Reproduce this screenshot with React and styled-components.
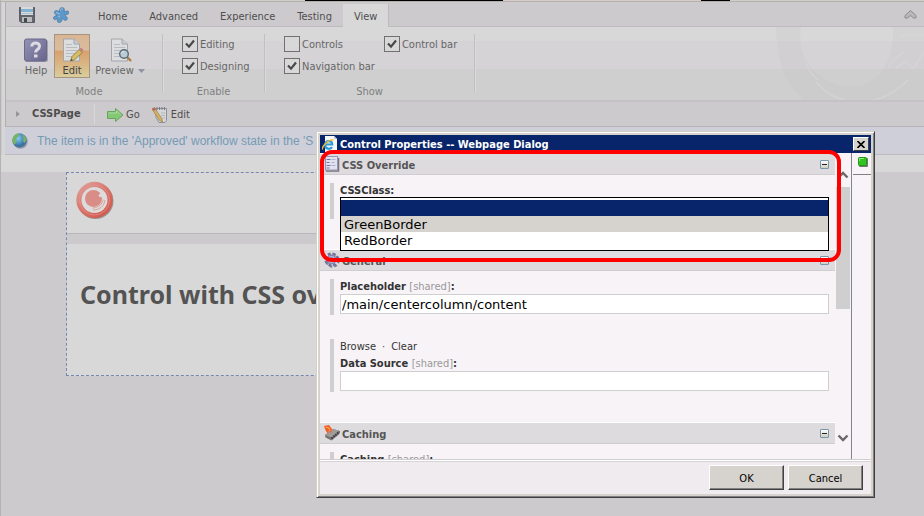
import React from 'react';
import styled, { createGlobalStyle, css } from 'styled-components';

const uiFont = '"DejaVu Sans Condensed", "DejaVu Sans", sans-serif';
const wideFont = '"DejaVu Sans", sans-serif';

const Global = createGlobalStyle`
  * { box-sizing: border-box; }
  body {
    margin: 0;
    background: #cdcacd;
    font: 11px/14px ${uiFont};
    color: #4e4e4e;
    overflow: hidden;
  }
  button, input, select { font: inherit; color: inherit; }
  h1, h2, ul { margin: 0; padding: 0; font-size: inherit; }
`;

const Page = styled.div`
  position: relative;
  min-height: 100vh;
  border-left: 1px solid #b4b2b4;
  background: #cdcacd;
`;

const Strip = styled.div`
  display: flex;
  height: 2px;
  padding-left: 304px;
  background: #cfcfc8;
  border-bottom: 1px solid #b2b2ac;
`;

const StripPart = styled.span`
  width: ${(p) => p.$width}px;
  background: ${(p) => p.$color};
`;

const Chrome = styled.header`
  margin-left: 4px;
  border-left: 1px solid #b0aeb0;
  box-shadow: -3px 0 0 #d6d6d6;
`;

const TabBar = styled.nav`
  display: flex;
  align-items: center;
  height: 25px;
  padding-right: 5px;
  border-bottom: 1px solid #bdbbbd;
`;

const QuickButton = styled.button`
  width: 16px;
  height: 16px;
  margin: 2px 0 0 ${(p) => p.$before}px;
  padding: 0;
  border: 0;
  background: none;
  svg { display: block; }
`;

const Tabs = styled.div`
  display: flex;
  align-self: stretch;
  flex: 1;
  margin-left: 18px;
  padding-top: 2px;
`;

const Tab = styled.a`
  height: 23px;
  padding: 6px 11px 0;
  color: #4e4e4e;
  text-decoration: none;
  ${(p) => p.$active && css`
    background: #d8d8d8;
    border-right: 1px solid #bdbbbd;
  `}
`;

const Ribbon = styled.div`
  position: relative;
  display: flex;
  height: 75px;
  padding: 7px 0 0 10px;
  border-bottom: 2px solid #c4c2c4;
  background: linear-gradient(#d8d8d8 14px, #d5d3d6 14px 42px, #cfcfcf 42px);
`;

const Watermark = styled.svg`
  position: absolute;
  top: 0;
  right: 0;
`;

const Group = styled.section`
  display: flex;
  flex-direction: column;
  width: ${(p) => p.$width}px;
  height: 58px;
  border-right: 1px solid #c1bfc1;
  box-shadow: 1px 0 0 #dadada;
`;

const GroupBody = styled.div`
  display: flex;
  flex: none;
  align-items: flex-start;
  gap: ${(p) => p.$gap}px;
  height: 50px;
  padding-left: ${(p) => p.$indent}px;
`;

const GroupTitle = styled.div`
  color: #808080;
  line-height: 16px;
  text-align: center;
`;

const BigButton = styled.button`
  display: flex;
  flex-direction: column;
  align-items: center;
  gap: 2px;
  width: ${(p) => p.$width}px;
  height: 44px;
  padding: 3px 0 0;
  border: 1px solid transparent;
  background: none;
  color: #666;
  white-space: nowrap;
  svg { flex: none; }
  ${(p) => p.$active && css`
    border-color: #a8947e;
    color: #444;
    background: linear-gradient(#d9b694, #d9bd9f 36%, #d89f6c 38%, #d9cd9c);
  `}
`;

const Caption = styled.span`
  display: flex;
  align-items: center;
  gap: 4px;
`;

const CheckColumn = styled.div`
  display: flex;
  flex-direction: column;
  gap: 6px;
  padding-top: 2px;
`;

const Check = styled.label`
  display: flex;
  align-items: center;
  gap: 2px;
  height: 16px;
  color: #666;
  line-height: 16px;
  white-space: nowrap;
`;

const CheckText = styled.span`
  padding-top: 2px;
`;

const CheckInput = styled.input`
  appearance: none;
  width: 16px;
  height: 16px;
  margin: 0;
  border: 1px solid #707070;
  background: #d8d8d8;
  &:checked {
    background: #d8d8d8 url("data:image/svg+xml,%3Csvg xmlns='http://www.w3.org/2000/svg' width='14' height='14'%3E%3Cpath d='M3 6.5l3 3.2 5-6.2' fill='none' stroke='%23484848' stroke-width='2.2'/%3E%3C/svg%3E");
  }
`;

const Crumbs = styled.div`
  display: flex;
  align-items: center;
  height: 25px;
  border-bottom: 1px solid #b6b4b6;
`;

const PageName = styled.button`
  display: flex;
  align-items: center;
  gap: 12px;
  width: 89px;
  height: 20px;
  padding: 0 0 0 10px;
  border: 0;
  border-right: 1px solid #d8d8d8;
  background: none;
  font-weight: bold;
`;

const CrumbButton = styled.button`
  display: flex;
  align-items: center;
  gap: ${(p) => p.$gap}px;
  margin-left: 12px;
  padding: 1px 0 0;
  border: 0;
  background: none;
`;

const Notice = styled.div`
  display: flex;
  align-items: center;
  gap: 9px;
  height: 28px;
  margin-left: 4px;
  padding-left: 7px;
  border-bottom: 1px solid #bcbcbc;
  box-shadow: -3px 0 0 #d6d6d6;
  background: #cecfd9;
  color: #769bb3;
  font: 12px/16px "Liberation Sans", Arial, sans-serif;
  white-space: nowrap;
`;

const Stage = styled.main`
  padding: 0 66px 0 65px;
  border-top: 17px solid #d8d8d8;
`;

const Canvas = styled.article`
  height: 204px;
  border: 1px dashed #7488b0;
  background: #d8d8d8;
`;

const CanvasHead = styled.div`
  height: 71px;
  padding: 8px 0 0 9px;
  border-bottom: 10px solid #cdcacd;
  box-shadow: inset 0 -1px 0 #b8b8b8;
`;

const Heading = styled.h1`
  padding: 34px 0 0 13px;
  color: #535353;
  font: bold 25px/32px "Noto Sans", ${uiFont};
  white-space: nowrap;
`;

const Dialog = styled.div`
  position: absolute;
  top: 131px;
  left: 315px;
  right: 49px;
  padding: 3px;
  border: 1px solid;
  border-color: #d4d0c8 #404040 #404040 #d4d0c8;
  box-shadow: inset 1px 1px 0 #fff, inset -1px -1px 0 #808080;
  background: #d6d3ce;
`;

const TitleBar = styled.div`
  display: flex;
  align-items: center;
  height: 18px;
  padding: 0 2px;
  background: #08246b;
  color: #fff;
  font-weight: bold;
`;

const TitleText = styled.span`
  flex: 1;
  margin-left: 2px;
  padding-top: 2px;
`;

const CloseButton = styled.button`
  display: flex;
  align-items: center;
  justify-content: center;
  width: 16px;
  height: 14px;
  padding: 0;
  border: 1px solid;
  border-color: #fff #404040 #404040 #fff;
  background: #d6d3ce;
`;

const DialogBody = styled.div`
  display: flex;
  height: 307px;
  border-bottom: 1px solid #cfcdcf;
  background: #f7f3f7;
`;

const Scroller = styled.div`
  flex: 1;
  min-width: 0;
  overflow: hidden;
`;

const ScrollTrack = styled.div`
  display: flex;
  flex-direction: column;
  align-items: center;
  width: 17px;
  padding: 18px 1px 17px;
  border-right: 1px solid #80848c;
`;

const ScrollThumb = styled.div`
  width: 14px;
  height: 122px;
  margin: 8px 0 auto;
  background: #cecfce;
`;

const SideTools = styled.div`
  width: 19px;
  padding-left: 1px;
`;

const SideTool = styled.button`
  display: block;
  width: 18px;
  height: 22px;
  padding: 0 0 0 5px;
  border: 0;
  border-bottom: 1px solid #808080;
  background: none;
  text-align: left;
`;

const SectionHead = styled.h2`
  display: flex;
  align-items: center;
  gap: 2px;
  height: 22px;
  padding: 0 6px 0 4px;
  border-top: 1px solid #fff;
  border-bottom: 1px solid #cfcdcf;
  background: #dddbde;
  color: #555;
  font: bold 11px/14px ${uiFont};
  svg { flex: none; }
`;

const SectionTitle = styled.span`
  flex: 1;
  padding-top: 3px;
`;

const Toggle = styled.button`
  width: 9px;
  height: 9px;
  margin-top: 1px;
  padding: 0;
  border: 1px solid #7797ad;
  border-radius: 1px;
  background: linear-gradient(#222, #222) 1px 3px / 5px 1px no-repeat, linear-gradient(#fff, #d0cdc0);
`;

const SectionBody = styled.div`
  padding: 8px 6px 6px 10px;
`;

const Field = styled.div`
  position: relative;
  margin-bottom: 24px;
  padding: 0 0 1px 6px;
  border-left: 4px solid #cecfce;
`;

const FieldLinks = styled.div`
  display: flex;
  gap: 6px;
  height: 17px;
  line-height: 16px;
  a { color: #333; text-decoration: none; }
`;

const FieldLabel = styled.label`
  display: block;
  height: 15px;
  color: #333;
  font-weight: bold;
  line-height: 16px;
`;

const Shared = styled.span`
  color: #999;
  font-weight: normal;
`;

const controlBox = css`
  display: block;
  width: 100%;
  height: 20px;
  padding: 0 1px;
  border: 1px solid #cecfce;
  border-radius: 0;
  background: #fff;
  color: #000;
  font: 13px/18px ${wideFont};
`;

const TextBox = styled.input`
  ${controlBox}
`;

const SelectBox = styled.select`
  ${controlBox}
`;

const OptionList = styled.ul`
  position: absolute;
  z-index: 1;
  top: 14px;
  left: 6px;
  right: 0;
  padding: 2px 0;
  border: 1px solid #000;
  background: #fff;
  list-style: none;
`;

const Option = styled.li`
  height: 16px;
  padding-left: 3px;
  background: ${(p) => p.$tone};
  color: #000;
  font: 13px/18px ${wideFont};
`;

const DialogFoot = styled.div`
  display: flex;
  justify-content: flex-end;
  gap: 4px;
  height: 34px;
  padding: 4px 8px 0;
  border-top: 1px solid #fff;
  box-shadow: inset 0 1px 0 #d6d4d6;
  background: #efebef;
`;

const PushButton = styled.button`
  width: 75px;
  height: 25px;
  padding: 2px 0 0;
  border: 1px solid;
  border-color: #fff #404040 #404040 #fff;
  box-shadow: inset -1px -1px 0 #808080;
  background: #d6d3ce;
  color: #000;
`;

const Callout = styled.div`
  position: absolute;
  z-index: 2;
  top: 18px;
  left: 3px;
  right: 33px;
  height: 112px;
  border: 4px solid #fe0000;
  border-radius: 12px;
  pointer-events: none;
`;

const SaveIcon = () => (
  <svg width="16" height="16" viewBox="0 0 16 16">
    <path d="M0.5 .5h15v15H2l-1.500-1.500z" fill="#62666c" stroke="#5a5e64" />
    <rect x="2" y="0" width="12" height="8" fill="#d8dadc" />
    <rect x="2" y="2" width="12" height="3" fill="#83b3ce" />
    <rect x="2" y="6" width="12" height="1" fill="#a9c4d4" />
    <rect x="3" y="10" width="10" height="5" fill="#b8babc" />
    <rect x="5" y="11" width="3" height="4" fill="#45484c" />
  </svg>
);

const PuzzleIcon = () => (
  <svg width="16" height="16" viewBox="0 0 16 16">
    <path d="M6.500 5C5.500 2.500 7.500 0 10 .8c2 .7 1.500 2.500 1 3.700 2 .3 3.500-1.500 4.500 0 1.200 2-.5 3.500-3.500 3 0 2 3.500 2.500 2 5-1.200 2-3 .5-4.500-1C9 13 8.500 15.800 6 15.500 3.500 15.300 4.500 13 5 11.500 3.500 12.500 1 13.500.5 11.500 0 9.500 2 9 4 8.500 2.500 7.500 .5 6 1.800 4.200 3.200 2.800 5 4 6.500 5z" fill="#5d98c8" stroke="#47769f" strokeWidth=".7" />
    <path d="M7.500 3.500c.3-1.500 1.300-2 2.500-1.500M3 5.500l4 1.500M5 10l2-1" stroke="#9cc3de" fill="none" />
  </svg>
);

const HelpIcon = () => (
  <svg width="24" height="24" viewBox="0 0 24 24">
    <defs>
      <linearGradient id="help" x2="1" y2="1"><stop stopColor="#9492b4" /><stop offset="1" stopColor="#67658e" /></linearGradient>
    </defs>
    <rect x="1" y="2" width="23" height="22" rx="2" fill="#a2a1aa" />
    <rect x="0.500" y="1" width="22" height="22" rx="2" fill="url(#help)" stroke="#6b698a" />
    <path d="M7.800 8.500C7.500 3.800 15.500 3.800 15.500 8.300c0 3.200-4 3.200-4 6.200" fill="none" stroke="#dcdce0" strokeWidth="3" />
    <rect x="10" y="16.500" width="3.500" height="3" fill="#dcdce0" />
  </svg>
);

const Sheet = () => (
  <>
    <path d="M3.500 1h10.500l5.500 5v17h-16z" fill="#dcddde" stroke="#a3a6aa" />
    <path d="M14 1v5h5.500" fill="#c8cbd0" stroke="#a3a6aa" />
    <path d="M6 6.500h6M6 9.500h11M6 12.500h11M6 15.500h11M6 18.500h8" stroke="#b8bcc1" />
  </>
);

const EditIcon = () => (
  <svg width="24" height="24" viewBox="0 0 24 24">
    <Sheet />
    <path d="M10.500 23l1.500-4.500 7-7 3.200 3.200-7.500 7z" fill="#d3bd66" stroke="#8c7336" strokeWidth=".8" />
    <path d="M19 11.500l1.200-1.200c1.500-1 4 1.500 2.800 3L22 14.500z" fill="#c18580" />
    <path d="M10.500 23l.7-2.300 1.700 1.600z" fill="#444" />
  </svg>
);

const PreviewIcon = () => (
  <svg width="24" height="24" viewBox="0 0 24 24">
    <Sheet />
    <path d="M19 19l4 4" stroke="#a78045" strokeWidth="2.400" />
    <circle cx="16" cy="16" r="4.300" fill="#b8ccd6" stroke="#5c6a76" strokeWidth="1.400" />
    <path d="M13.500 15.500c.3-1.500 1-2 2.500-2.200" stroke="#e6ecee" fill="none" />
  </svg>
);

const ArrowIcon = () => (
  <svg width="17" height="14" viewBox="0 0 17 14">
    <path d="M.5 3.500h8v-3l7.500 6.500-7.500 6.500v-3h-8z" fill="#84c774" stroke="#68a45c" />
    <path d="M1.500 5h8V3l4 3.500" stroke="#abd99e" fill="none" />
  </svg>
);

const NotepadIcon = () => (
  <svg width="16" height="16" viewBox="0 0 16 16">
    <path d="M4 1.500h10.500v12l-1.500 2H7l-3-5z" fill="#d5d6d7" stroke="#8c9098" />
    <path d="M5 0v3M7.500 0v3M10 0v3M12.500 0v3" stroke="#777b82" />
    <path d="M9 6h4M9 8.500h4M10 11h3" stroke="#b4b8bc" />
    <path d="M0 2l2.500-1.500L10 12l.5 3-3-1.500z" fill="#d2b260" stroke="#8d7544" strokeWidth=".6" />
    <path d="M0 2l2.500-1.500 1.500 2L1.500 4z" fill="#bd625c" />
  </svg>
);

const GlobeIcon = () => (
  <svg width="16" height="16" viewBox="0 0 16 16">
    <defs>
      <radialGradient id="globe" cx=".4" cy=".35"><stop stopColor="#8fcae8" /><stop offset=".6" stopColor="#5299c8" /><stop offset="1" stopColor="#3f74a2" /></radialGradient>
    </defs>
    <circle cx="8.500" cy="8.500" r="7.300" fill="#9a9aa4" />
    <circle cx="7.500" cy="7.500" r="7.200" fill="url(#globe)" />
    <path d="M.6 6c.4-3 2.500-5 5-5.500l1.900 1-1.500 2L4 6l.5 3-1.500 2.500C1.500 10.500.6 9 .6 7.500zM10.500 1.500c2.200 1 3.800 3 4 5.500L12.500 10l-1.500-2 .5-2.500z" fill="#76b464" />
  </svg>
);

const LogoIcon = () => (
  <svg width="40" height="40" viewBox="0 0 40 40">
    <defs>
      <linearGradient id="ring" x2=".8" y2="1"><stop stopColor="#dfa7a1" /><stop offset=".5" stopColor="#d9776e" /><stop offset="1" stopColor="#d2554a" /></linearGradient>
    </defs>
    <circle cx="19.500" cy="20" r="18" fill="#969494" />
    <circle cx="18.500" cy="19" r="18.200" fill="url(#ring)" />
    <circle cx="18.500" cy="19" r="15" fill="none" stroke="#df9a93" strokeWidth=".7" />
    <circle cx="18.500" cy="19" r="13" fill="#dddbdb" />
    <circle cx="17.500" cy="17.500" r="8.500" fill="#da8d86" />
    <circle cx="24.500" cy="14.500" r="1.800" fill="#dddbdb" />
    <path d="M27 18.500c-.5 5-5 8.500-10.500 8.500M29 19c-.5 6-5.500 10-12 10" fill="none" stroke="#d99c95" strokeWidth=".9" />
  </svg>
);

const IeIcon = () => (
  <svg width="16" height="16" viewBox="0 0 16 16">
    <path d="M3 0h9l3 3v13H3z" fill="#f5f7f8" />
    <path d="M12 0v3h3" fill="#b8c9d6" />
    <path d="M3 8.500h7.200C10 4 3.500 4 3.200 9c-.2 4.500 5.600 4.700 6.800 2" fill="none" stroke="#2f9bd9" strokeWidth="2.200" />
    <path d="M.8 13.500C-1 10.500 7 3 11.500 4" fill="none" stroke="#efb82f" strokeWidth="1.400" />
  </svg>
);

const FormIcon = () => (
  <svg width="16" height="16" viewBox="0 0 16 16">
    <path d="M2 15h12.500V2" stroke="#77757f" strokeWidth="1.500" fill="none" />
    <rect x="1.500" y=".5" width="12" height="13.500" fill="#e1e1f0" stroke="#9694ae" />
    <path d="M2.500 3.500h4M2.500 6.500h3M2.500 9.500h4M2.500 12h3" stroke="#7573a4" />
    <path d="M7.500 3.500h4M7.500 6.500h3M7.500 9.500h4" stroke="#b1afca" />
  </svg>
);

const GearIcon = () => (
  <svg width="16" height="16" viewBox="0 0 16 16">
    <circle cx="8.500" cy="8.500" r="6" fill="none" stroke="#85838c" strokeWidth="2.500" strokeDasharray="2.700 2" />
    <circle cx="7.500" cy="7.500" r="5.800" fill="none" stroke="#6e72a0" strokeWidth="2.800" strokeDasharray="2.600 2" />
    <circle cx="7.500" cy="7.500" r="4.300" fill="#b4b8d8" stroke="#8488b0" strokeWidth="1.500" />
    <circle cx="7.500" cy="7.500" r="1.800" fill="#e5e3e9" stroke="#6e7299" />
  </svg>
);

const CacheIcon = () => (
  <svg width="16" height="16" viewBox="0 0 16 16">
    <path d="M1 10l8-6 6.500 2v3l-8 6.500-6-3z" fill="#777371" />
    <path d="M1 10l8-6 6.500 2-8 6.500z" fill="#a09c99" />
    <path d="M7.500 13.500l8-7" stroke="#3c3a3a" strokeWidth="2" strokeDasharray="1.500 1" />
    <path d="M0 1l5-1 3 4-1 4-2-2-1 3-2-3-1-2z" fill="#ef6029" />
    <path d="M1.500 2l3.500 1 1 3" stroke="#ffb04b" fill="none" />
  </svg>
);

const Chevron = ({ down }) => (
  <svg width="12" height="8" viewBox="0 0 12 8">
    <path d={down ? 'M1.500 1.500L6 6l4.500-4.500' : 'M1.500 6.500L6 2l4.500 4.500'} fill="none" stroke="#686868" strokeWidth="2.400" />
  </svg>
);

const Section = ({ icon, title, children }) => (
  <section>
    <SectionHead>
      {icon}
      <SectionTitle>{title}</SectionTitle>
      <Toggle aria-label={`Collapse ${title}`} />
    </SectionHead>
    <SectionBody>{children}</SectionBody>
  </section>
);

const CheckItem = ({ label, on }) => (
  <Check>
    <CheckInput type="checkbox" defaultChecked={on} />
    <CheckText>{label}</CheckText>
  </Check>
);

const tabs = ['Home', 'Advanced', 'Experience', 'Testing', 'View'];

export default function App() {
  return (
    <Page>
      <Global />
      <Strip>
        <StripPart $width={198} $color="#000" />
        <StripPart $width={198} $color="#d9cbc9" />
        <StripPart $width={29} $color="#000" />
      </Strip>
      <Chrome>
        <TabBar>
          <QuickButton $before={13} aria-label="Save"><SaveIcon /></QuickButton>
          <QuickButton $before={18} aria-label="Extensions"><PuzzleIcon /></QuickButton>
          <Tabs>
            {tabs.map((t) => <Tab key={t} href="#" $active={t === 'View'}>{t}</Tab>)}
          </Tabs>
          <QuickButton $before={0} aria-label="Collapse ribbon">
            <svg width="14" height="12" viewBox="0 0 14 12">
              <path d="M7.500 1.500L13 6.500v2.500h-2.500l-3-2.500-3 2.500H2V6.500z" fill="#b8b8b8" stroke="#8c8c8c" />
            </svg>
          </QuickButton>
        </TabBar>
        <Ribbon>
          <Watermark width="148" height="73" viewBox="776 27 148 73" aria-hidden="true">
            <path fillRule="evenodd" d="M776 27C777 60 784 84 804 100H924V27ZM801 27C795 60 820 86 852 86 878 86 895 62 893 27Z" fill="#c9c6ca" fillOpacity=".3" />
            <path d="M806 63c3 8 6 12 12 17M816 82c24 28 64 26 92-2M888 68c5-9 10-13 16-16M896 68l8-6 10 6 10-16M901 38v-3h23" fill="none" stroke="#d8d8d8" strokeWidth="2" strokeOpacity=".5" />
          </Watermark>
          <Group $width={147}>
            <GroupBody $gap={5} $indent={7}>
              <BigButton $width={26}><HelpIcon />Help</BigButton>
              <BigButton $width={36} $active><EditIcon />Edit</BigButton>
              <BigButton $width={50}>
                <PreviewIcon />
                <Caption>
                  Preview
                  <svg width="7" height="4"><path d="M0 0h7L3.500 4z" fill="#8f93a3" /></svg>
                </Caption>
              </BigButton>
            </GroupBody>
            <GroupTitle>Mode</GroupTitle>
          </Group>
          <Group $width={102}>
            <GroupBody $gap={0} $indent={19}>
              <CheckColumn>
                <CheckItem label="Editing" on />
                <CheckItem label="Designing" on />
              </CheckColumn>
            </GroupBody>
            <GroupTitle>Enable</GroupTitle>
          </Group>
          <Group $width={210}>
            <GroupBody $gap={9} $indent={19}>
              <CheckColumn>
                <CheckItem label="Controls" />
                <CheckItem label="Navigation bar" on />
              </CheckColumn>
              <CheckColumn>
                <CheckItem label="Control bar" on />
              </CheckColumn>
            </GroupBody>
            <GroupTitle>Show</GroupTitle>
          </Group>
        </Ribbon>
        <Crumbs>
          <PageName>
            <svg width="4" height="6"><path d="M0 0l4 3-4 3z" fill="#959595" /></svg>
            CSSPage
          </PageName>
          <CrumbButton $gap={2}><ArrowIcon />Go</CrumbButton>
          <CrumbButton $gap={3}><NotepadIcon />Edit</CrumbButton>
        </Crumbs>
      </Chrome>
      <Notice>
        <GlobeIcon />
        The item is in the 'Approved' workflow state in the 'S
      </Notice>
      <Stage>
        <Canvas>
          <CanvasHead><LogoIcon /></CanvasHead>
          <Heading>Control with CSS override</Heading>
        </Canvas>
      </Stage>
      <Dialog role="dialog" aria-label="Control Properties">
        <TitleBar>
          <IeIcon />
          <TitleText>Control Properties -- Webpage Dialog</TitleText>
          <CloseButton aria-label="Close">
            <svg width="8" height="7"><path d="M.5 0l7 7M7.500 0l-7 7" stroke="#000" strokeWidth="1.600" /></svg>
          </CloseButton>
        </TitleBar>
        <DialogBody>
          <Scroller>
            <Section icon={<FormIcon />} title="CSS Override">
              <Field>
                <FieldLabel htmlFor="css-class">CSSClass:</FieldLabel>
                <SelectBox id="css-class">
                  <option />
                  <option>GreenBorder</option>
                  <option>RedBorder</option>
                </SelectBox>
                <OptionList role="listbox" aria-label="CSSClass">
                  <Option role="option" aria-selected="true" $tone="#08246b" />
                  <Option role="option" $tone="#d6d3ce">GreenBorder</Option>
                  <Option role="option" $tone="#fff">RedBorder</Option>
                </OptionList>
              </Field>
            </Section>
            <Section icon={<GearIcon />} title="General">
              <Field>
                <FieldLabel htmlFor="placeholder">Placeholder <Shared>[shared]</Shared>:</FieldLabel>
                <TextBox id="placeholder" defaultValue="/main/centercolumn/content" />
              </Field>
              <Field>
                <FieldLinks><a href="#">Browse</a><span>·</span><a href="#">Clear</a></FieldLinks>
                <FieldLabel htmlFor="data-source">Data Source <Shared>[shared]</Shared>:</FieldLabel>
                <TextBox id="data-source" />
              </Field>
            </Section>
            <Section icon={<CacheIcon />} title="Caching">
              <Field>
                <FieldLabel htmlFor="caching">Caching <Shared>[shared]</Shared>:</FieldLabel>
                <TextBox id="caching" />
              </Field>
            </Section>
          </Scroller>
          <ScrollTrack>
            <Chevron />
            <ScrollThumb />
            <Chevron down />
          </ScrollTrack>
          <SideTools>
            <SideTool aria-label="Validation status">
              <svg width="10" height="10" viewBox="0 0 10 10">
                <rect x="1" y="1" width="9" height="9" rx="1" fill="#777" />
                <rect x=".5" y=".5" width="8" height="8" rx="1" fill="#32c51f" stroke="#239416" />
                <path d="M1.500 4V1.500H6" stroke="#91ee7e" fill="none" />
              </svg>
            </SideTool>
          </SideTools>
        </DialogBody>
        <DialogFoot>
          <PushButton>OK</PushButton>
          <PushButton>Cancel</PushButton>
        </DialogFoot>
        <Callout />
      </Dialog>
    </Page>
  );
}
